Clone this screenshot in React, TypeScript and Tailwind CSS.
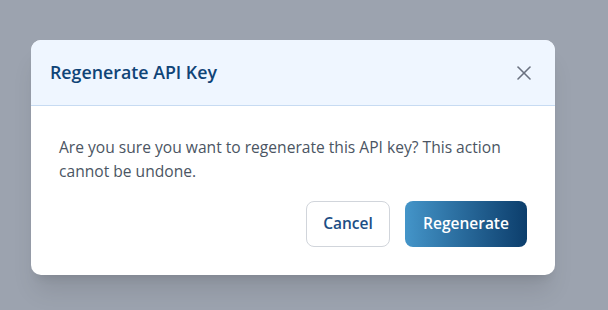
import { X } from "lucide-react";

export default function App() {
  return (
    <div
      className="h-[310px] w-[608px] bg-[#9ca3af] pl-[31px] pt-[40px]"
      style={{ fontFamily: '"Open Sans", "Noto Sans", sans-serif' }}
    >
      <div className="w-[524px] overflow-hidden rounded-[10px] bg-white shadow-xl">
        <div className="flex h-[66px] items-center justify-between border-b border-[#c7dbf2] bg-[#eff6ff] pl-[19px] pr-[19px]">
          <h2 className="text-[17.8px] font-semibold text-[#0f4477]">Regenerate API Key</h2>
          <button className="text-[#6b7280]">
            <X size={24} strokeWidth={1.6} />
          </button>
        </div>
        <div className="px-7 pb-7 pt-[29px]">
          <p className="text-[15.6px] leading-6 text-[#4b5563]">
            Are you sure you want to regenerate this API key? This action cannot be undone.
          </p>
          <div className="mt-[18px] flex justify-end gap-[15px]">
            <button className="h-[46px] w-[84px] rounded-lg border border-[#d1d5db] bg-white text-[15.5px] font-semibold text-[#1c4e85]">
              Cancel
            </button>
            <button className="h-[46px] w-[122px] rounded-lg bg-gradient-to-r from-[#4495c9] to-[#0c3e6c] text-[15.5px] font-semibold text-white">
              Regenerate
            </button>
          </div>
        </div>
      </div>
    </div>
  );
}
